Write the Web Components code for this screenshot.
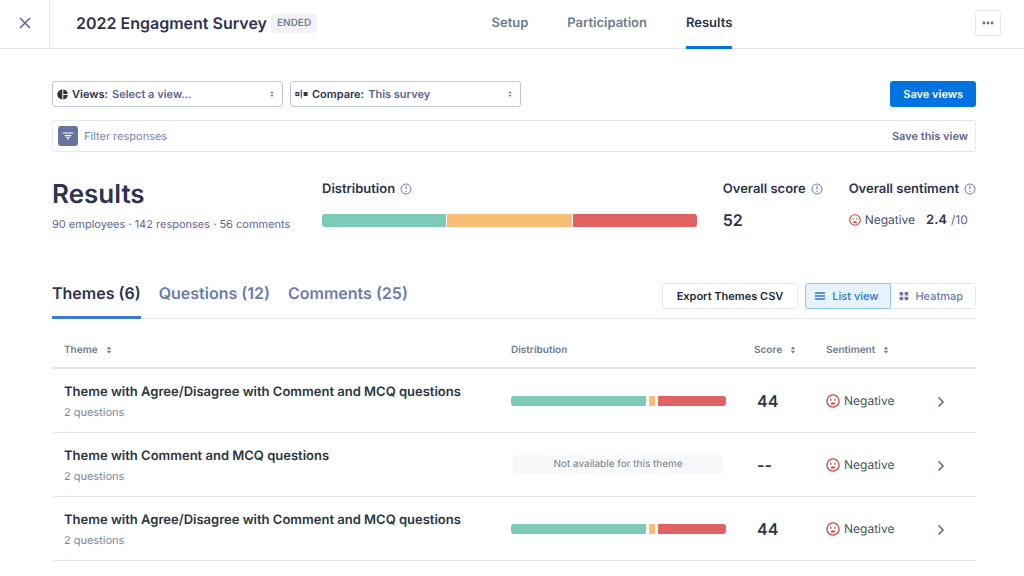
<!DOCTYPE html>
<html lang="en">
<head>
<meta charset="utf-8">
<meta name="viewport" content="width=device-width, initial-scale=1">
<title>2022 Engagment Survey</title>
<style>
  body {
    margin: 0;
    background: #fff;
    font-family: Inter, "Liberation Sans", sans-serif;
    font-size: 11px;
    line-height: 16px;
    text-rendering: geometricPrecision;
    color: #2e3350;
    --ink: #2e3350;
    --ink-dark: #2b3640;
    --slate: #5c6691;
    --muted: #6d7b8d;
    --periwinkle: #6c7cab;
    --line: #e6e8f0;
    --blue: #0073e0;
    --green: #7dcab9;
    --amber: #f7be77;
    --red: #e16263;
  }
</style>
</head>
<body>
<survey-page></survey-page>
<script>
const reset = `
  *, *::before, *::after { box-sizing: border-box; }
  :host([hidden]) { display: none; }
  button, input, select { font: inherit; color: inherit; text-rendering: inherit; margin: 0; padding: 0; border: 0; background: none; }
  button { cursor: pointer; }
  a { color: inherit; text-decoration: none; }
  h1, h2, p { margin: 0; }
  svg { display: block; flex: none; }
`;

const define = (name, css, html) => customElements.define(name, class extends HTMLElement {
  constructor() {
    super();
    this.attachShadow({ mode: "open" });
  }
  connectedCallback() {
    const body = typeof html === "function" ? html(this) : html;
    this.shadowRoot.innerHTML = `<style>${reset}${css}</style>${body}`;
  }
});

const icons = {
  close: [12, 12, `<path d="M1 1l10 10M11 1L1 11" stroke="currentColor" stroke-width="1.5" fill="none"/>`],
  more: [12, 4, `<circle cx="1.9" cy="2" r="1.4" fill="currentColor"/><circle cx="6" cy="2" r="1.4" fill="currentColor"/><circle cx="10.1" cy="2" r="1.4" fill="currentColor"/>`],
  pie: [11, 11, `<path d="M5.3 0.5v10A5 5 0 0 1 5.3 0.5z" fill="currentColor"/><path d="M6.3 0.5A5 5 0 0 1 10.8 4.9H6.3zM6.3 6h4.5A5 5 0 0 1 6.3 10.5z" fill="currentColor"/>`],
  compare: [13, 10, `<rect x="1" y="3.6" width="2.8" height="2.8" fill="none" stroke="currentColor" stroke-width="1.2"/><path d="M6.3 0.8v8.4" stroke="currentColor" stroke-width="1"/><rect x="8.6" y="3" width="4" height="4" rx=".5" fill="currentColor"/>`],
  sort: [6, 8, `<path d="M3 0.4L5.2 3.2H.8zM3 7.6L.8 4.8h4.4z" fill="currentColor"/>`],
  sortSmall: [6, 8, `<path d="M3 1L4.7 3.3H1.3zM3 7L1.3 4.7h3.4z" fill="currentColor"/>`],
  filter: [12, 8, `<path d="M.8 1h10.4M2.8 3.6h6.4M4.6 5.6h2.8M5.3 7.2h1.4" stroke="currentColor" stroke-width="1.1"/>`],
  info: [12, 12, `<circle cx="6" cy="6" r="5" fill="none" stroke="currentColor"/><path d="M6 3.1v3.5" stroke="currentColor" stroke-width="1.1"/><circle cx="6" cy="8.4" r=".7" fill="currentColor"/>`],
  list: [12, 10, `<path d="M1 2h10M1 5h10M1 8h10" stroke="currentColor" stroke-width="1.4"/>`],
  grid: [10, 10, `<rect x=".5" y="1" width="3.7" height="3.4" rx=".8" fill="currentColor"/><rect x="5.6" y="1" width="3.7" height="3.4" rx=".8" fill="currentColor"/><rect x=".5" y="5.8" width="3.7" height="3.4" rx=".8" fill="currentColor"/><rect x="5.6" y="5.8" width="3.7" height="3.4" rx=".8" fill="currentColor"/>`],
  chevron: [8, 12, `<path d="M1.5 1.5L6 6l-4.5 4.5" fill="none" stroke="currentColor" stroke-width="1.6"/>`],
  sad: [14, 14, `<circle cx="7" cy="7" r="6.1" fill="none" stroke="currentColor" stroke-width="1.3"/><path d="M4 4.5l1.6.7M10 4.5l-1.6.7" stroke="currentColor" stroke-width=".6"/><circle cx="4.9" cy="6" r=".8" fill="currentColor"/><circle cx="9.1" cy="6" r=".8" fill="currentColor"/><path d="M4.6 10.4C5 7.9 9 7.9 9.4 10.4z" fill="currentColor"/>`]
};

define("ui-icon", `:host { display: inline-flex; flex: none; }`, el => {
  const [w, h, shape] = icons[el.getAttribute("name")];
  const width = Number(el.getAttribute("size")) || w;
  return `<svg width="${width}" height="${Math.round(width * h / w)}" viewBox="0 0 ${w} ${h}" aria-hidden="true">${shape}</svg>`;
});

define("status-badge", `
  :host {
    display: inline-block; padding: 0 6px; border-radius: 3px;
    background: #f0f2f5; color: #74828f;
    font-size: 10px; line-height: 19px; font-weight: 600;
  }`, `<slot></slot>`);

define("survey-header", `
  :host { display: block; border-bottom: 1px solid var(--line); }
  header {
    display: grid; grid-template-columns: 50px 442fr auto 269fr;
    align-items: center; min-height: 48px; padding-right: 23px;
  }
  .close {
    align-self: stretch; display: flex; align-items: center; justify-content: center;
    padding-bottom: 2px; border-right: 1px solid var(--line); color: var(--slate);
  }
  .title { display: flex; align-items: center; gap: 4px; padding: 0 0 2px 26px; }
  h1 { font-size: 16px; line-height: 24px; font-weight: 600; white-space: nowrap; }
  nav { align-self: stretch; display: flex; gap: 39px; font-size: 13px; font-weight: 600; color: var(--muted); }
  nav a { display: flex; align-items: center; margin-bottom: -1px; border-bottom: 3px solid transparent; }
  nav a[aria-current] { color: var(--ink); border-color: var(--blue); }
  .more {
    justify-self: end; display: flex; align-items: center; justify-content: center;
    width: 26px; height: 26px; margin-bottom: 2px; border: 1px solid var(--line); border-radius: 3px; color: #626c85;
  }`, `
  <header>
    <button class="close" aria-label="Close"><ui-icon name="close"></ui-icon></button>
    <div class="title"><h1>2022 Engagment Survey</h1><status-badge>ENDED</status-badge></div>
    <nav>
      <a href="#setup">Setup</a>
      <a href="#participation">Participation</a>
      <a href="#results" aria-current="page">Results</a>
    </nav>
    <button class="more" aria-label="More actions"><ui-icon name="more"></ui-icon></button>
  </header>`);

define("view-picker", `
  :host {
    display: flex; align-items: center; gap: 4px; flex: 0 1 231px; height: 26px; padding: 0 7px 0 4px;
    border: 1px solid #bcc5de; border-radius: 3px; color: var(--ink-dark);
    font-weight: 600;
  }
  label { color: var(--ink); white-space: nowrap; }
  select { flex: 1; min-width: 0; appearance: none; color: var(--slate); outline: none; }
  .arrows { color: var(--muted); }`, el => `
  <ui-icon name="${el.getAttribute("icon")}"></ui-icon>
  <label for="choice">${el.getAttribute("label")}</label>
  <select id="choice"><option>${el.getAttribute("value")}</option></select>
  <ui-icon class="arrows" name="sortSmall"></ui-icon>`);

define("view-toolbar", `
  :host { display: flex; gap: 7px; }
  .save {
    margin-left: auto; height: 26px; padding: 0 13px; border-radius: 3px;
    background: var(--blue); color: #fff; font-weight: 600; white-space: nowrap;
  }`, `
  <view-picker icon="pie" label="Views:" value="Select a view..."></view-picker>
  <view-picker icon="compare" label="Compare:" value="This survey"></view-picker>
  <button class="save">Save views</button>`);

define("filter-bar", `
  :host { display: block; }
  form {
    display: flex; align-items: center; gap: 6px; height: 32px; padding: 0 7px 0 5px;
    border: 1px solid var(--line); border-radius: 3px;
  }
  label {
    display: flex; align-items: center; justify-content: center; width: 20px; height: 20px;
    border-radius: 3px; background: #66739f; color: #fff;
  }
  input { flex: 1; min-width: 0; outline: none; }
  input::placeholder { color: #7583ad; opacity: 1; }
  button { color: var(--slate); font-weight: 600; white-space: nowrap; }`, `
  <form>
    <label for="filter" aria-label="Filter responses"><ui-icon name="filter"></ui-icon></label>
    <input id="filter" type="text" placeholder="Filter responses">
    <button type="button">Save this view</button>
  </form>`);

/* parts="a b c": relative widths of the positive, neutral and negative shares */
define("distribution-bar", `
  :host { display: block; --gap: 1px; --bar: 13px; }
  div { display: flex; gap: var(--gap); height: var(--bar); border-radius: 3px; overflow: hidden; }
  span:nth-child(1) { background: var(--green); }
  span:nth-child(2) { background: var(--amber); }
  span:nth-child(3) { background: var(--red); }`, el => `
  <div role="img" aria-label="Response distribution">${el.getAttribute("parts").split(" ")
    .map(n => `<span style="flex:${n} 1 0"></span>`).join("")}</div>`);

define("sentiment-tag", `
  :host { display: flex; align-items: center; gap: 4px; font-size: 12px; color: #4a5262; }
  ui-icon { color: #c8473f; }`, el => `
  <ui-icon name="sad" size="${el.getAttribute("size") || 14}"></ui-icon><slot></slot>`);

define("metric-block", `
  :host { display: flex; flex-direction: column; gap: 15px; }
  .label { display: flex; align-items: center; gap: 5px; font-size: 13px; font-weight: 600; white-space: nowrap; }
  .label ui-icon { color: var(--periwinkle); }
  .value { display: flex; align-items: center; min-height: 16px; }
  ::slotted(*) { flex: none; }
  ::slotted(distribution-bar) { flex: 1; }`, el => `
  <div class="label">${el.getAttribute("label")}<ui-icon name="info"></ui-icon></div>
  <div class="value"><slot></slot></div>`);

define("results-summary", `
  :host { display: grid; grid-template-columns: minmax(244px, auto) 1fr auto auto; gap: 26px; align-items: start; }
  h2 { font-size: 26px; line-height: 32px; font-weight: 600; }
  .intro { padding-top: 1px; }
  .intro p { margin-top: 5px; color: var(--slate); white-space: nowrap; }
  .score { font-size: 16px; font-weight: 600; }
  .rating { margin-left: 11px; font-size: 12px; color: var(--slate); }
  .rating b { font-size: 13px; font-weight: 600; color: var(--ink); margin-right: 4px; }
  distribution-bar { min-width: 80px; }
  metric-block { padding-top: 3px; }`, `
  <div class="intro">
    <h2>Results</h2>
    <p>90 employees · 142 responses · 56 comments</p>
  </div>
  <metric-block label="Distribution"><distribution-bar parts="1 1 1"></distribution-bar></metric-block>
  <metric-block label="Overall score"><span class="score">52</span></metric-block>
  <metric-block label="Overall sentiment">
    <sentiment-tag size="12">Negative</sentiment-tag>
    <span class="rating"><b>2.4</b>/10</span>
  </metric-block>`);

define("results-tabs", `
  :host { display: flex; justify-content: space-between; align-items: flex-start; border-bottom: 1px solid var(--line); }
  nav { display: flex; gap: 18px; }
  nav a {
    height: 36px; margin-bottom: -1px; border-bottom: 3px solid transparent;
    font-size: 16px; line-height: 20px; font-weight: 600; color: var(--periwinkle); white-space: nowrap;
  }
  nav a[aria-current] { color: var(--ink); border-color: #3c79d4; }
  .actions { display: flex; gap: 7px; }
  button {
    display: flex; align-items: center; gap: 6px; height: 26px; padding: 0 14px;
    border: 1px solid var(--line); border-radius: 3px; white-space: nowrap;
  }
  .export { color: #20293a; font-weight: 600; }
  .switch { display: flex; font-weight: 500; }
  .switch button { color: var(--periwinkle); padding: 0 12px 0 8px; }
  .switch button:first-child { border-radius: 3px 0 0 3px; }
  .switch button:last-child { border-radius: 0 3px 3px 0; border-left: 0; }
  .switch button[aria-pressed="true"] { background: #e6f3fe; border-color: #92c6f2; color: #2b77cc; }`, `
  <nav>
    <a href="#themes" aria-current="true">Themes (6)</a>
    <a href="#questions">Questions (12)</a>
    <a href="#comments">Comments (25)</a>
  </nav>
  <div class="actions">
    <button class="export">Export Themes CSV</button>
    <div class="switch">
      <button aria-pressed="true"><ui-icon name="list"></ui-icon>List view</button>
      <button aria-pressed="false"><ui-icon name="grid"></ui-icon>Heatmap</button>
    </div>
  </div>`);

const themes = [
  { name: "Theme with Agree/Disagree with Comment and MCQ questions", parts: "135 6 68", score: "44" },
  { name: "Theme with Comment and MCQ questions", parts: null, score: "--" },
  { name: "Theme with Agree/Disagree with Comment and MCQ questions", parts: "135 6 68", score: "44" }
];

define("theme-table", `
  :host { display: block; }
  table { width: 100%; table-layout: fixed; border-collapse: separate; border-spacing: 0; }
  th, td { padding: 0; text-align: left; vertical-align: middle; }
  th { height: 50px; padding-top: 14px; border-bottom: 2px solid #e0e4ea; font-size: 10px; font-weight: 600; color: var(--muted); }
  th button { display: flex; align-items: center; gap: 8px; }
  td { height: 64px; border-bottom: 1px solid #e6e9ee; }
  th:first-child, td:first-child { padding-left: 12px; }
  td:first-child { padding-top: 2px; }
  .distribution { width: 243px; }
  .score { width: 72px; }
  .sentiment { width: 111px; }
  .open { width: 39px; }
  .name { font-size: 13px; line-height: 20px; font-weight: 600; color: var(--ink-dark); }
  .count { line-height: 20px; color: #7c8894; }
  distribution-bar { --gap: 3px; --bar: 10px; margin-right: 28px; }
  .none { margin: 0 31px 0 2px; background: #f7f8fa; border-radius: 3px; font-size: 10px; line-height: 19px; text-align: center; color: #74808c; }
  .number { padding-left: 3px; font-size: 16px; font-weight: 600; color: var(--ink-dark); }
  td a { display: inline-flex; vertical-align: middle; color: #626f86; }`, `
  <table>
    <thead>
      <tr>
        <th><button>Theme <ui-icon name="sort"></ui-icon></button></th>
        <th class="distribution">Distribution</th>
        <th class="score"><button>Score <ui-icon name="sort"></ui-icon></button></th>
        <th class="sentiment"><button>Sentiment <ui-icon name="sort"></ui-icon></button></th>
        <th class="open"></th>
      </tr>
    </thead>
    <tbody>${themes.map(t => `
      <tr>
        <td><div class="name">${t.name}</div><div class="count">2 questions</div></td>
        <td>${t.parts ? `<distribution-bar parts="${t.parts}"></distribution-bar>` : `<div class="none">Not available for this theme</div>`}</td>
        <td class="number">${t.score}</td>
        <td><sentiment-tag>Negative</sentiment-tag></td>
        <td><a href="#theme" aria-label="Open theme"><ui-icon name="chevron"></ui-icon></a></td>
      </tr>`).join("")}
    </tbody>
  </table>`);

define("survey-page", `
  :host { display: block; }
  main { padding: 32px 48px 12px 52px; }
  filter-bar { margin-top: 13px; }
  results-summary { margin-top: 26px; }
  results-tabs { margin-top: 51px; }`, `
  <survey-header></survey-header>
  <main>
    <view-toolbar></view-toolbar>
    <filter-bar></filter-bar>
    <results-summary></results-summary>
    <results-tabs></results-tabs>
    <theme-table></theme-table>
  </main>`);
</script>
</body>
</html>
